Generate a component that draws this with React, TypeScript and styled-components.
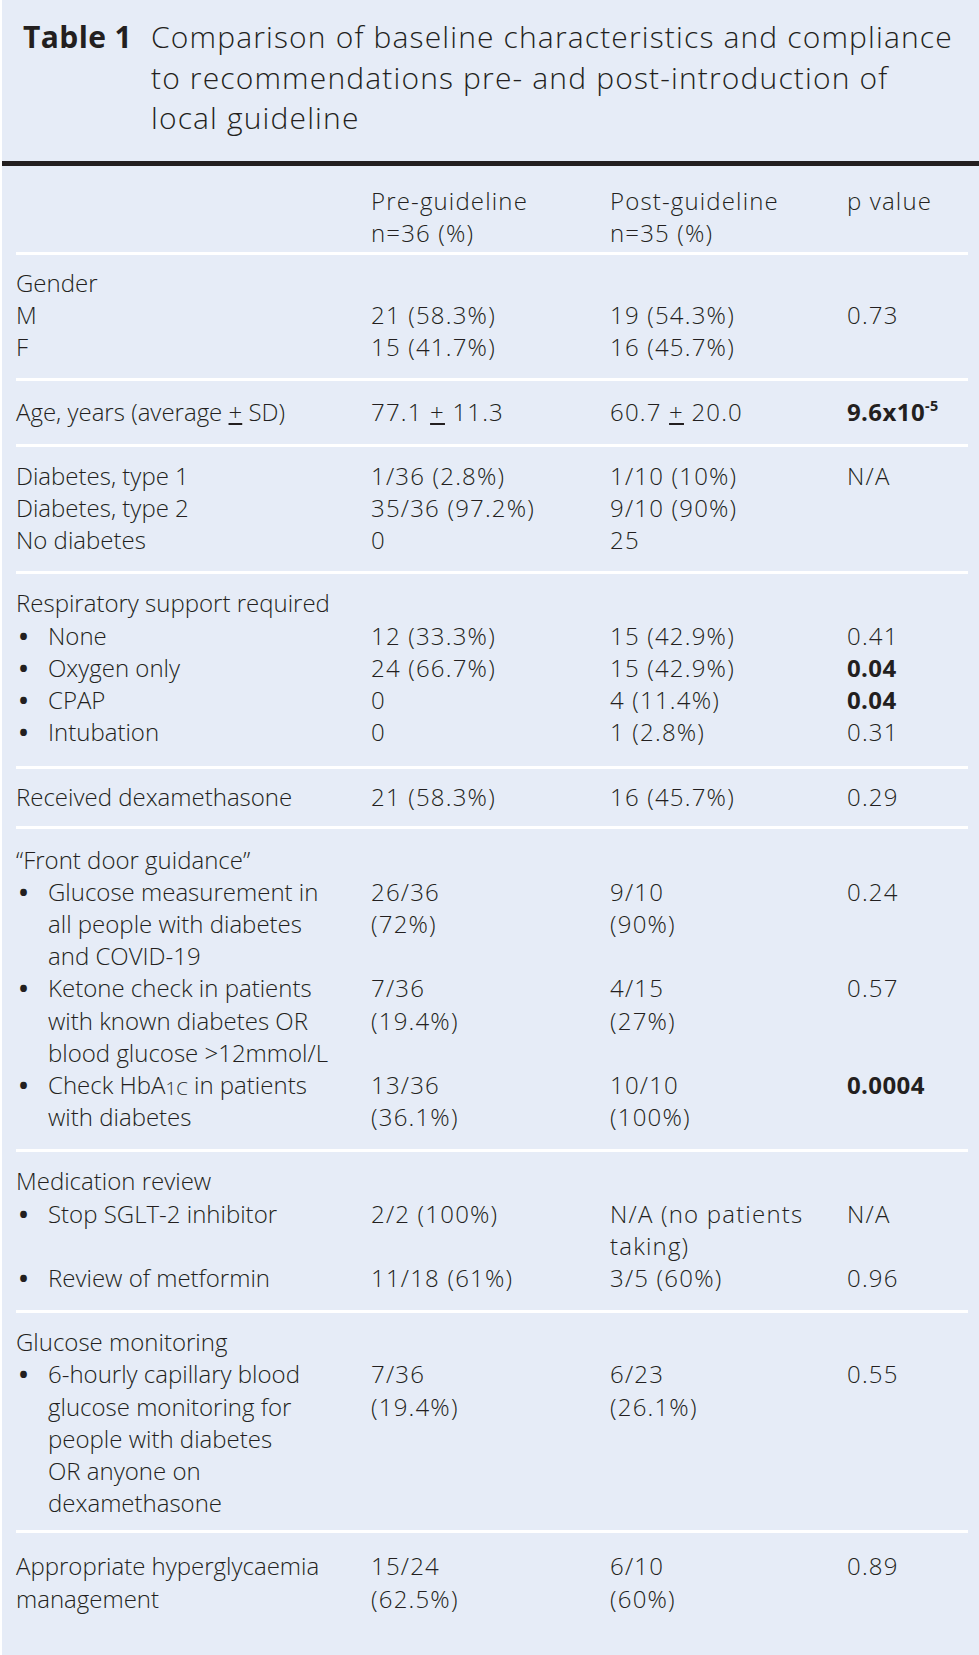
import React from "react";
import styled, { createGlobalStyle } from "styled-components";

const GlobalStyle = createGlobalStyle`
  html, body { margin: 0; padding: 0; background: #ffffff; }
  body { font-family: "Open Sans", "Noto Sans", "Liberation Sans", sans-serif; color: #231f20; }
`;

const Page = styled.div`
  margin-left: 2px;
  width: 977px;
  min-height: 1655px;
  background: #e6ecf7;
  box-sizing: border-box;
`;

const TitleBlock = styled.div`
  display: flex;
  padding: 17px 10px 22px 21px;
  font-size: 30px;
  line-height: 40.5px;
  font-weight: 300;
  white-space: nowrap;
`;

const TitleLabel = styled.span`
  flex: 0 0 auto;
  width: 128px;
  font-weight: 700;
  letter-spacing: 0.4px;
`;

const TitleText = styled.span`
  flex: 1;
  letter-spacing: 1.15px;
`;

const ThickRule = styled.div`
  height: 5px;
  background: #231f20;
`;

const Table = styled.div`
  padding: 0 11px 0 14px;
  font-size: 24px;
  line-height: 32.2px;
  font-weight: 300;
`;

const Header = styled.div`
  display: grid;
  grid-template-columns: 355px 239px 237px 1fr;
  padding: 19px 0 3px;
  border-bottom: 3px solid #ffffff;
  letter-spacing: 1.15px;
  white-space: nowrap;
`;

const Section = styled.div<{ $pt: number; $pb: number }>`
  display: flex;
  flex-direction: column;
  padding: ${(p) => p.$pt}px 0 ${(p) => p.$pb}px;
  & + & {
    border-top: 3px solid #ffffff;
  }
`;

const Row = styled.div`
  display: grid;
  grid-template-columns: 355px 239px 237px 1fr;
  white-space: nowrap;
`;

const LabelCell = styled.div`
  display: flex;
  align-items: flex-start;
`;

const Bullet = styled.span`
  flex: 0 0 32px;
  padding-left: 3px;
  box-sizing: border-box;
  font-weight: 700;
`;

const Cell = styled.div<{ $bold?: boolean }>`
  font-weight: ${(p) => (p.$bold ? 700 : 300)};
  letter-spacing: ${(p) => (p.$bold ? "0.4px" : "1.2px")};
`;

const Sup = styled.sup`
  font-size: 0.6em;
  line-height: 0;
  vertical-align: 0.7em;
`;

const Sub = styled.sub`
  font-size: 0.78em;
  line-height: 0;
  vertical-align: -0.04em;
`;

type Item = {
  label: React.ReactNode;
  bullet?: boolean;
  pre?: React.ReactNode;
  post?: React.ReactNode;
  p?: React.ReactNode;
  bold?: boolean;
};

type Sec = { pt: number; pb: number; items: Item[] };

const PM = () => <u>+</u>;

const sections: Sec[] = [
  {
    pt: 12,
    pb: 14,
    items: [
      { label: "Gender" },
      { label: "M", pre: "21 (58.3%)", post: "19 (54.3%)", p: "0.73" },
      { label: "F", pre: "15 (41.7%)", post: "16 (45.7%)" },
    ],
  },
  {
    pt: 15,
    pb: 16,
    items: [
      {
        label: (
          <>
            Age, years (average <PM /> SD)
          </>
        ),
        pre: (
          <>
            77.1 <PM /> 11.3
          </>
        ),
        post: (
          <>
            60.7 <PM /> 20.0
          </>
        ),
        p: (
          <>
            9.6x10<Sup>-5</Sup>
          </>
        ),
        bold: true,
      },
    ],
  },
  {
    pt: 13,
    pb: 15,
    items: [
      { label: "Diabetes, type 1", pre: "1/36 (2.8%)", post: "1/10 (10%)", p: "N/A" },
      { label: "Diabetes, type 2", pre: "35/36 (97.2%)", post: "9/10 (90%)" },
      { label: "No diabetes", pre: "0", post: "25" },
    ],
  },
  {
    pt: 13,
    pb: 18,
    items: [
      { label: "Respiratory support required" },
      { label: "None", bullet: true, pre: "12 (33.3%)", post: "15 (42.9%)", p: "0.41" },
      { label: "Oxygen only", bullet: true, pre: "24 (66.7%)", post: "15 (42.9%)", p: "0.04", bold: true },
      { label: "CPAP", bullet: true, pre: "0", post: "4 (11.4%)", p: "0.04", bold: true },
      { label: "Intubation", bullet: true, pre: "0", post: "1 (2.8%)", p: "0.31" },
    ],
  },
  {
    pt: 12,
    pb: 12,
    items: [{ label: "Received dexamethasone", pre: "21 (58.3%)", post: "16 (45.7%)", p: "0.29" }],
  },
  {
    pt: 15,
    pb: 16,
    items: [
      { label: "\u201cFront door guidance\u201d" },
      {
        label: (
          <>
            Glucose measurement in
            <br />
            all people with diabetes
            <br />
            and COVID-19
          </>
        ),
        bullet: true,
        pre: (
          <>
            26/36
            <br />
            (72%)
          </>
        ),
        post: (
          <>
            9/10
            <br />
            (90%)
          </>
        ),
        p: "0.24",
      },
      {
        label: (
          <>
            Ketone check in patients
            <br />
            with known diabetes OR
            <br />
            blood glucose &gt;12mmol/L
          </>
        ),
        bullet: true,
        pre: (
          <>
            7/36
            <br />
            (19.4%)
          </>
        ),
        post: (
          <>
            4/15
            <br />
            (27%)
          </>
        ),
        p: "0.57",
      },
      {
        label: (
          <>
            Check HbA<Sub>1C</Sub> in patients
            <br />
            with diabetes
          </>
        ),
        bullet: true,
        pre: (
          <>
            13/36
            <br />
            (36.1%)
          </>
        ),
        post: (
          <>
            10/10
            <br />
            (100%)
          </>
        ),
        p: "0.0004",
        bold: true,
      },
    ],
  },
  {
    pt: 13,
    pb: 16,
    items: [
      { label: "Medication review" },
      {
        label: "Stop SGLT-2 inhibitor",
        bullet: true,
        pre: "2/2 (100%)",
        post: (
          <>
            N/A (no patients
            <br />
            taking)
          </>
        ),
        p: "N/A",
      },
      { label: "Review of metformin", bullet: true, pre: "11/18 (61%)", post: "3/5 (60%)", p: "0.96" },
    ],
  },
  {
    pt: 13,
    pb: 11,
    items: [
      { label: "Glucose monitoring" },
      {
        label: (
          <>
            6-hourly capillary blood
            <br />
            glucose monitoring for
            <br />
            people with diabetes
            <br />
            OR anyone on
            <br />
            dexamethasone
          </>
        ),
        bullet: true,
        pre: (
          <>
            7/36
            <br />
            (19.4%)
          </>
        ),
        post: (
          <>
            6/23
            <br />
            (26.1%)
          </>
        ),
        p: "0.55",
      },
    ],
  },
  {
    pt: 17,
    pb: 22,
    items: [
      {
        label: (
          <>
            Appropriate hyperglycaemia
            <br />
            management
          </>
        ),
        pre: (
          <>
            15/24
            <br />
            (62.5%)
          </>
        ),
        post: (
          <>
            6/10
            <br />
            (60%)
          </>
        ),
        p: "0.89",
      },
    ],
  },
];

export default function App() {
  return (
    <>
      <GlobalStyle />
      <Page>
        <TitleBlock>
          <TitleLabel>Table 1</TitleLabel>
          <TitleText>
            Comparison of baseline characteristics and compliance
            <br />
            to recommendations pre- and post-introduction of
            <br />
            local guideline
          </TitleText>
        </TitleBlock>
        <ThickRule />
        <Table>
          <Header>
            <div />
            <div>
              Pre-guideline
              <br />
              n=36 (%)
            </div>
            <div>
              Post-guideline
              <br />
              n=35 (%)
            </div>
            <div>p value</div>
          </Header>
          {sections.map((s, i) => (
            <Section key={i} $pt={s.pt} $pb={s.pb}>
              {s.items.map((it, j) => (
                <Row key={j}>
                  <LabelCell>
                    {it.bullet && <Bullet>•</Bullet>}
                    <span>{it.label}</span>
                  </LabelCell>
                  <Cell>{it.pre}</Cell>
                  <Cell>{it.post}</Cell>
                  <Cell $bold={it.bold}>{it.p}</Cell>
                </Row>
              ))}
            </Section>
          ))}
        </Table>
      </Page>
    </>
  );
}
